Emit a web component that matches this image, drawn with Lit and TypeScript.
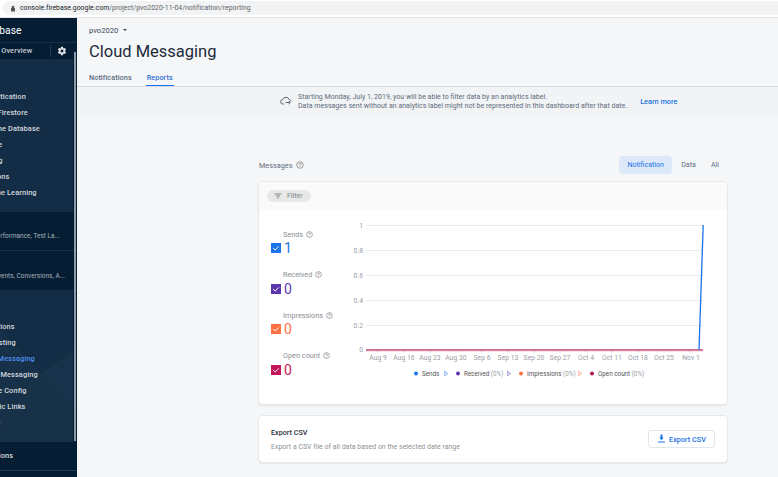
import { LitElement, html, css, svg } from "lit";
import { customElement } from "lit/decorators.js";

const helpIcon = (size = 8) => html`<svg class="help" width=${size} height=${size} viewBox="0 0 16 16">
  <circle cx="8" cy="8" r="6.6" fill="none" stroke="#777" stroke-width="1.4"></circle>
  <path d="M5.9 6.4c0-1.2 1-2 2.1-2s2.1.8 2.1 1.9c0 1.500-2.100 1.500-2.100 3.200M8 10.600v1.400" fill="none" stroke="#777" stroke-width="1.400"></path>
</svg>`;

const metrics = [
  { label: "Sends", value: "1", color: "#1a73e8" },
  { label: "Received", value: "0", color: "#5e35b1" },
  { label: "Impressions", value: "0", color: "#ff7043" },
  { label: "Open count", value: "0", color: "#c2185b" },
];

const ticks = ["Aug 9", "Aug 16", "Aug 23", "Aug 30", "Sep 6", "Sep 13", "Sep 20", "Sep 27", "Oct 4", "Oct 11", "Oct 18", "Oct 25", "Nov 1"];
const grid = [
  { label: "1", y: 225.5 },
  { label: "0.8", y: 250.5 },
  { label: "0.6", y: 275.5 },
  { label: "0.4", y: 300.5 },
  { label: "0.2", y: 325.5 },
];
const legend = [
  { name: "Sends", pct: "", color: "#1a73e8", dot: 416, arrow: 446 },
  { name: "Received", pct: "(0%)", color: "#5e35b1", dot: 458, arrow: 509 },
  { name: "Impressions", pct: "(0%)", color: "#ff7043", dot: 521, arrow: 580 },
  { name: "Open count", pct: "(0%)", color: "#ad1457", dot: 592, arrow: 0 },
];

const chart = html`<svg class="chart" width="380" height="170" viewBox="345 215 380 170">
  ${grid.map(
    (g) => svg`<line x1="366" x2="703" y1=${g.y} y2=${g.y} stroke="#ececec" stroke-width="1"></line>
    <text x="363" y=${g.y + 2.5} text-anchor="end" class="axis">${g.label}</text>`
  )}
  <text x="363" y="352" text-anchor="end" class="axis">0</text>
  ${ticks.map(
    (t, i) => svg`<line x1=${378 + i * 26} x2=${378 + i * 26} y1="350" y2="352.500" stroke="#ccc"></line>
    <text x=${378 + i * 26 + (i === 12 ? 1 : 0)} y="359.500" text-anchor="middle" class="axis">${t}</text>`
  )}
  <line x1="366" x2="703" y1="350.800" y2="350.800" stroke="#eda5c0" stroke-width="1"></line>
  <line x1="366" x2="703" y1="349.800" y2="349.800" stroke="#c2416f" stroke-width="1.200"></line>
  <line x1="699" x2="703.200" y1="350" y2="225" stroke="#1a73e8" stroke-width="1.300"></line>
  ${legend.map(
    (l) => svg`<circle cx=${l.dot} cy="373.500" r="2" fill=${l.color}></circle>
    <text x=${l.dot + 6} y="376" class="legend">${l.name}${l.pct ? svg`<tspan fill="#9aa0a6"> ${l.pct}</tspan>` : ""}</text>
    ${l.arrow ? svg`<path d="M${l.arrow - 1.500} 371v5l3.500-2.500z" fill=${l.color} fill-opacity=".2" stroke=${l.color} stroke-opacity=".5" stroke-width=".7"></path>` : ""}`
  )}
</svg>`;

@customElement("app-root")
export class AppRoot extends LitElement {
  static styles = css`
    :host {
      display: flex;
      flex-direction: column;
      width: 778px;
      height: 477px;
      overflow: hidden;
      font-family: Roboto, "Liberation Sans", sans-serif;
      background: #f5f6f8;
    }
    .urlbar {
      height: 18px;
      flex: none;
      padding: 1px 0 2px 3px;
      background: #fff;
      border-bottom: 1px solid #e2e4e6;
      box-sizing: border-box;
    }
    .pill {
      height: 14px;
      border-radius: 7px 0 0 7px;
      background: #f1f3f4;
      display: flex;
      align-items: center;
      gap: 4px;
      padding-left: 7px;
      font-size: 6.900px;
      color: #5f6368;
      letter-spacing: 0.010px;
    }
    .pill b {
      font-weight: 400;
      color: #202124;
    }
    .body {
      flex: 1;
      display: flex;
      min-height: 0;
    }
    .side {
      width: 77px;
      flex: none;
      overflow: hidden;
      background: #051e34;
      display: flex;
      flex-direction: column;
      position: relative;
      color: #d4d9de;
      font-size: 7.400px;
      font-weight: 500;
      letter-spacing: 0.100px;
    }
    .scroll {
      position: absolute;
      right: 1px;
      top: 34px;
      height: 389px;
      width: 2.500px;
      background: #8d9aa8;
    }
    .brand {
      height: 24px;
      flex: none;
      font-size: 10.200px;
      font-weight: 400;
      color: #fff;
      display: flex;
      align-items: center;
      margin-left: -18px;
      padding-top: 1px;
      box-sizing: border-box;
    }
    .overview {
      height: 17px;
      flex: none;
      display: flex;
      align-items: center;
      border-top: 1px solid #12304b;
      margin-left: -25px;
      color: #c5ccd3;
      box-sizing: border-box;
    }
    .overview span {
      width: 75px;
      flex: none;
      white-space: nowrap;
      border-right: 1px solid #1d3b57;
      line-height: 12px;
    }
    .overview svg {
      margin-left: 6px;
    }
    .group {
      flex: none;
      box-sizing: border-box;
      background: #132d46;
      margin-right: 4px;
    }
    .build {
      height: 153px;
      padding-top: 30px;
    }
    .dark {
      background: #051e34;
      margin-right: 0;
      border-bottom: 1px solid #16324b;
      height: 40px;
      font-size: 6.300px;
      font-weight: 400;
      color: #a9b4be;
      padding-top: 21px;
      white-space: nowrap;
      margin-left: -40px;
    }
    .dark.q {
      height: 39px;
      margin-left: -42px;
      padding-top: 20px;
    }
    .grow {
      height: 151px;
      padding-top: 28px;
      position: relative;
    }
    .grow::before,
    .grow::after {
      content: "";
      position: absolute;
      inset: 0;
    }
    .grow::before {
      background: rgba(255, 255, 255, 0.028);
      clip-path: polygon(73px 60px, 40px 83px, 73px 118px);
    }
    .grow::after {
      background: rgba(255, 255, 255, 0.018);
      clip-path: polygon(0 38px, 73px 118px, 73px 151px, 0 151px);
    }
    .item {
      height: 16px;
      line-height: 16px;
      margin-left: -24px;
      white-space: nowrap;
      position: relative;
      z-index: 1;
    }
    .item.on {
      color: #4d8ff0;
    }
    .ext {
      padding-top: 6px;
      height: 29px;
      box-sizing: border-box;
      border-bottom: 1px solid #1d3b57;
    }
    .main {
      flex: 1;
      min-width: 0;
      display: flex;
      flex-direction: column;
    }
    .head {
      height: 69px;
      flex: none;
      box-sizing: border-box;
      padding: 7px 0 0 12px;
      border-bottom: 1px solid #d6dade;
      background: #f5f6f8;
      display: flex;
      flex-direction: column;
    }
    .project {
      font-size: 7.600px;
      color: #3c4858;
      display: flex;
      align-items: center;
      gap: 5px;
      height: 11px;
    }
    .caret {
      width: 0;
      height: 0;
      border-left: 2.500px solid transparent;
      border-right: 2.500px solid transparent;
      border-top: 2.500px solid #3c4858;
    }
    h1 {
      margin: 6px 0 0;
      font-size: 16.500px;
      line-height: 22px;
      font-weight: 400;
      color: #1c2b3a;
      font-family: Roboto, sans-serif;
    }
    .tabs {
      display: flex;
      gap: 15px;
      margin-top: 8px;
      font-size: 7.200px;
      font-weight: 500;
      color: #5a6a7c;
      letter-spacing: 0.100px;
    }
    .tab {
      height: 15px;
      line-height: 13px;
    }
    .tab.on {
      color: #2f6fd8;
      border-bottom: 1.500px solid #1a73e8;
      margin-left: -1px;
      box-sizing: border-box;
      width: 28px;
      text-align: center;
    }
    .banner {
      height: 28px;
      flex: none;
      background: #f2f3f4;
      display: flex;
      align-items: center;
      padding-left: 203px;
      font-size: 7.050px;
      line-height: 9px;
      color: #5b6b7c;
    }
    .banner svg {
      margin-right: 6px;
    }
    .banner .more {
      margin-left: 13px;
      color: #1a73e8;
      font-weight: 500;
      font-size: 7.300px;
    }
    .content {
      flex: 1;
      min-height: 0;
      padding: 41px 51px 0 182px;
      display: flex;
      flex-direction: column;
    }
    .title {
      display: flex;
      align-items: center;
      height: 18px;
      font-size: 7.300px;
      color: #5f6f80;
      gap: 4px;
    }
    .toggle {
      margin-left: auto;
      display: flex;
      align-items: center;
      color: #5f6f80;
      font-size: 7.100px;
    }
    .toggle span {
      height: 18px;
      line-height: 18px;
      text-align: center;
    }
    .toggle .on {
      width: 53px;
      border-radius: 4px;
      background: #dde8f8;
      color: #1a73e8;
    }
    .toggle .d {
      margin: 0 0 0 9px;
    }
    .toggle .a {
      margin: 0 8px 0 15px;
    }
    .card {
      background: #fff;
      border-radius: 4px;
      box-shadow: 0 0 0 1px #e6e8ea, 0 1px 2px 0 #c4c7cc;
      margin-top: 8px;
    }
    .filterbar {
      height: 28px;
      background: #fafafa;
      display: flex;
      align-items: center;
      padding-left: 8px;
      border-radius: 4px 4px 0 0;
      box-sizing: border-box;
    }
    .chip {
      height: 12px;
      width: 44px;
      background: #e8e8e8;
      border-radius: 6px;
      display: flex;
      align-items: center;
      gap: 5px;
      padding-left: 7px;
      box-sizing: border-box;
      font-size: 7px;
      color: #80868b;
    }
    .stats {
      display: flex;
      height: 194px;
    }
    .metrics {
      width: 86px;
      flex: none;
      padding: 19px 0 0 12px;
      box-sizing: border-box;
    }
    .metric {
      height: 40.600px;
    }
    .mlabel {
      padding-left: 12px;
      height: 10px;
      display: flex;
      align-items: center;
      gap: 2.500px;
      font-size: 7.300px;
      color: #8a8f94;
      white-space: nowrap;
    }
    .mrow {
      display: flex;
      align-items: center;
      gap: 3px;
      height: 18px;
      font-size: 14px;
      font-weight: 400;
    }
    .box {
      width: 10px;
      height: 10px;
      display: block;
    }
    .chart {
      display: block;
      margin-top: 5px;
    }
    .axis {
      font-size: 6.800px;
      fill: #9aa0a6;
      font-family: Roboto, sans-serif;
    }
    .legend {
      font-size: 6.300px;
      fill: #555;
      font-family: Roboto, sans-serif;
    }
    .export {
      margin-top: 12px;
      height: 46px;
      display: flex;
      align-items: center;
      padding: 0 12px;
    }
    .export h2 {
      margin: 0 0 6px;
      font-size: 7.200px;
      font-weight: 500;
      color: #2a2f36;
    }
    .export p {
      margin: 0;
      font-size: 6.900px;
      color: #8d9196;
      letter-spacing: 0.040px;
    }
    .btn {
      margin-left: auto;
      width: 67px;
      height: 18px;
      border: 1px solid #e3e6ea;
      border-radius: 3px;
      box-sizing: border-box;
      display: flex;
      align-items: center;
      justify-content: center;
      gap: 3px;
      color: #1a73e8;
      font-size: 7.300px;
      font-weight: 500;
    }
  `;

  render() {
    return html`
      <div class="urlbar">
        <div class="pill">
          <svg width="6" height="7" viewBox="0 0 12 14"><path d="M3.500 6V4a2.500 2.500 0 0 1 5 0v2h1.500v7H2V6z" fill="#555"></path></svg>
          <span><b>console.firebase.google.com</b>/project/pvo2020-11-04/notification/reporting</span>
        </div>
      </div>
      <div class="body">
        <nav class="side">
          <div class="brand">Firebase</div>
          <div class="overview">
            <span>Project Overview</span>
            <svg width="10" height="10" viewBox="0 0 24 24"><path fill="#dfe3e7" d="M19.430 12.980c.04-.32.070-.64.070-.98s-.03-.66-.07-.98l2.110-1.650c.19-.15.240-.42.120-.64l-2-3.460c-.12-.22-.39-.3-.61-.22l-2.490 1c-.52-.4-1.080-.73-1.690-.98l-.38-2.650A.49.49 0 0 0 14 2h-4c-.25 0-.46.180-.49.420l-.38 2.650c-.61.250-1.170.590-1.690.98l-2.490-1c-.23-.09-.49 0-.61.220l-2 3.460c-.13.220-.07.490.12.640l2.110 1.650c-.04.320-.07.650-.07.980s.03.660.07.980l-2.110 1.650c-.19.150-.24.420-.12.640l2 3.460c.12.220.39.300.61.220l2.490-1c.52.400 1.080.730 1.690.980l.38 2.650c.03.240.24.420.49.420h4c.25 0 .46-.18.490-.42l.38-2.650c.61-.25 1.170-.59 1.690-.98l2.490 1c.23.090.49 0 .61-.22l2-3.460c.12-.22.070-.49-.12-.64l-2.110-1.650zM12 15.500a3.500 3.500 0 1 1 0-7 3.500 3.500 0 0 1 0 7z"></path></svg>
          </div>
          <div class="group build">
            ${["Authentication", "Cloud Firestore", "Realtime Database", "Storage", "Hosting", "Functions", "Machine Learning"].map(
              (t) => html`<div class="item">${t}</div>`
            )}
          </div>
          <div class="group dark q">Crashlytics, Performance, Test La...</div>
          <div class="group dark">Dashboard, Events, Conversions, A...</div>
          <div class="group grow">
            ${["Predictions", "A/B Testing", "Cloud Messaging", "In-App Messaging", "Remote Config", "Dynamic Links", "AdMob"].map(
              (t) => html`<div class="item ${t === "Cloud Messaging" ? "on" : ""}">${t}</div>`
            )}
          </div>
          <div class="ext"><div class="item">Extensions</div></div>
          <div class="scroll"></div>
        </nav>
        <main class="main">
          <header class="head">
            <div class="project">pvo2020 <i class="caret"></i></div>
            <h1>Cloud Messaging</h1>
            <div class="tabs">
              <div class="tab">Notifications</div>
              <div class="tab on">Reports</div>
            </div>
          </header>
          <div class="banner">
            <svg width="12" height="10" viewBox="0 0 24 20" fill="none" stroke="#4b5a6a" stroke-width="1.800"><path d="M8 16H6a4.500 4.500 0 0 1-.6-9A7 7 0 0 1 18.500 7a4.500 4.500 0 0 1 3.500 4"></path><path d="M11 13h9M17 10l3.500 3-3.500 3"></path></svg>
            <div>Starting Monday, July 1, 2019, you will be able to filter data by an analytics label.<br />Data messages sent without an analytics label might not be represented in this dashboard after that date.</div>
            <span class="more">Learn more</span>
          </div>
          <div class="content">
            <div class="title">
              Messages ${helpIcon()}
              <div class="toggle">
                <span class="on">Notification</span>
                <span class="d">Data</span>
                <span class="a">All</span>
              </div>
            </div>
            <section class="card">
              <div class="filterbar">
                <div class="chip">
                  <svg width="8" height="6" viewBox="0 0 16 12"><path d="M1 2h14M4 6h8M6.500 10h3" stroke="#666" stroke-width="1.500"></path></svg>
                  Filter
                </div>
              </div>
              <div class="stats">
                <div class="metrics">
                  ${metrics.map(
                    (m) => html`<div class="metric">
                      <div class="mlabel">${m.label} ${helpIcon(7)}</div>
                      <div class="mrow" style="color:${m.color}">
                        <svg class="box" viewBox="0 0 10 10"><rect width="10" height="10" fill=${m.color}></rect><path d="M2.200 5.200l2 1.800 3.600-3.600" fill="none" stroke="#fff" stroke-width="1"></path></svg>
                        ${m.value}
                      </div>
                    </div>`
                  )}
                </div>
                ${chart}
              </div>
            </section>
            <section class="card export">
              <div>
                <h2>Export CSV</h2>
                <p>Export a CSV file of all data based on the selected date range</p>
              </div>
              <div class="btn">
                <svg width="9" height="10" viewBox="0 0 18 20"><path fill="#1a73e8" d="M13 7h-2V1H7v6H4.500L9 12.500zM2 15h14v2H2z"></path></svg>
                Export CSV
              </div>
            </section>
          </div>
        </main>
      </div>
    `;
  }
}
